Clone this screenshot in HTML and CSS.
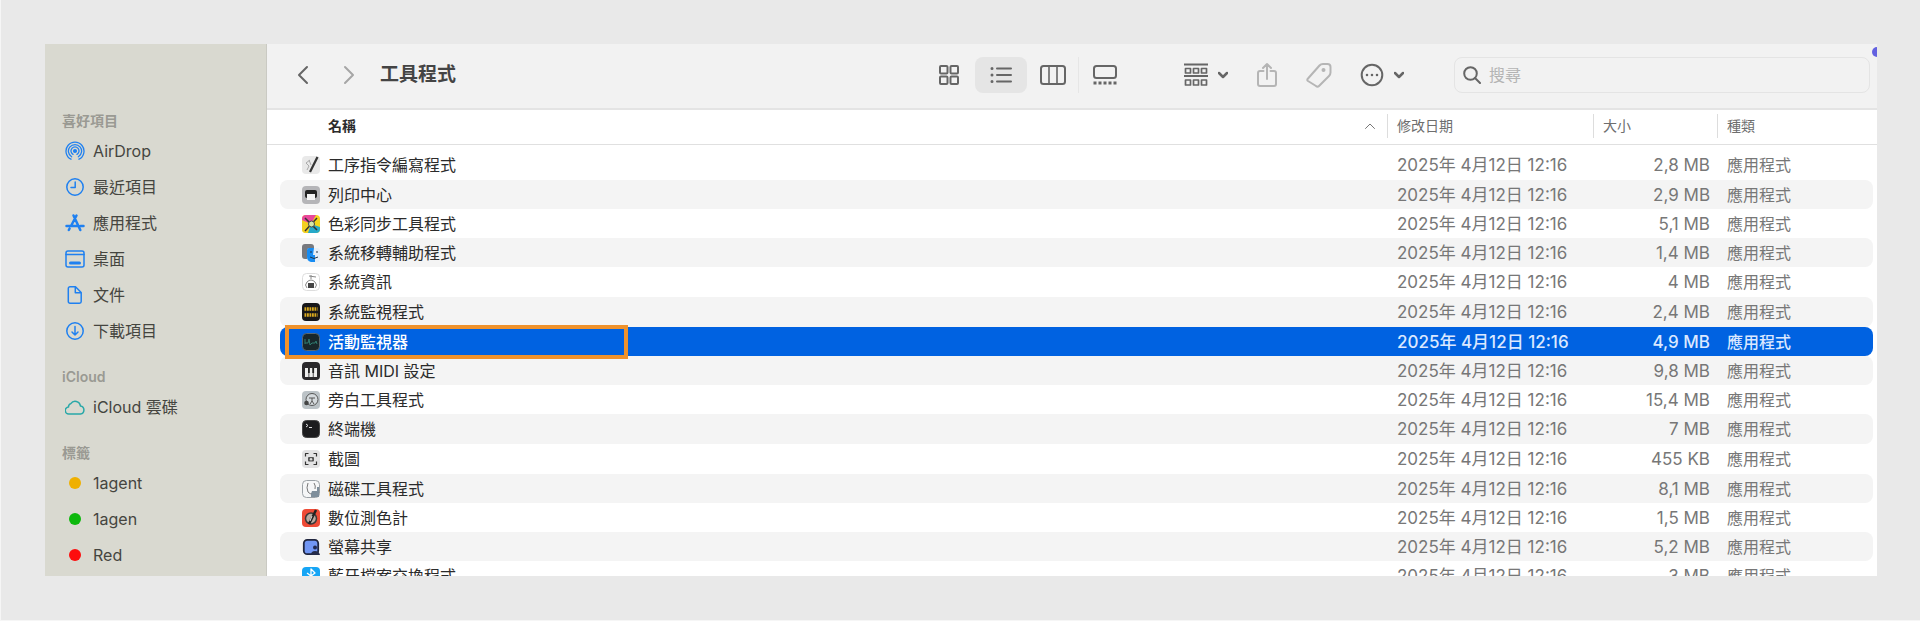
FILE: index.html
```html
<!DOCTYPE html>
<html lang="zh-Hant">
<head>
<meta charset="utf-8">
<title>工具程式</title>
<link rel="stylesheet" href="styles.css">
</head>
<body>
<div class="window">
  <nav class="sidebar">
    <h2>喜好項目</h2>
    <a href="#"><svg viewBox="0 0 20 20"><circle cx="10" cy="10" r="1.3" fill="currentColor"/><path d="M8 13.400a4 4 0 1 1 4 0M6.600 15.800a6.600 6.600 0 1 1 6.800 0M6 18.200a9 9 0 1 1 8 0" stroke-width="1.300"/></svg>AirDrop</a>
    <a href="#"><svg viewBox="0 0 20 20"><circle cx="10" cy="10" r="8.2"/><path d="M10.2 5v5.5H6"/></svg>最近項目</a>
    <a href="#"><svg viewBox="0 0 20 20" class="bold"><path d="M8.5 2.5l6.8 14.5M11.5 2.5L6 13M1.5 13h11M15.5 13h3M4.6 15.5L3.8 17"/></svg>應用程式</a>
    <a href="#"><svg viewBox="0 0 20 20"><rect x="1" y="2" width="18" height="16" rx="2"/><path d="M1 5.500h18"/><path d="M5.500 14h9" stroke-width="3"/></svg>桌面</a>
    <a href="#"><svg viewBox="0 0 20 20"><path d="M5 1.800h5.500l5.700 5.700v9a1.700 1.700 0 0 1-1.700 1.700H5a1.700 1.700 0 0 1-1.700-1.700v-13A1.700 1.700 0 0 1 5 1.800zM10.300 2v5.700H16"/></svg>文件</a>
    <a href="#"><svg viewBox="0 0 20 20"><circle cx="10" cy="10" r="8.200"/><path d="M10 5.500v8.500M7 11l3 3 3-3"/></svg>下載項目</a>
    <h2>iCloud</h2>
    <a href="#"><svg viewBox="0 0 20 20" class="teal"><path d="M4 17a3.500 3.500 0 0 1-.5-7 3.400 3.400 0 0 1 2.300-3.400 5.300 5.300 0 0 1 9.600 2.300A4.100 4.100 0 0 1 15.500 17z"/></svg>iCloud 雲碟</a>
    <h2>標籤</h2>
    <a href="#"><span class="dot yellow"></span>1agent</a>
    <a href="#"><span class="dot green"></span>1agen</a>
    <a href="#"><span class="dot red"></span>Red</a>
  </nav>
  <main class="content">
    <header class="toolbar">
      <div class="nav">
        <button aria-label="返回"><svg width="12" height="20" viewBox="0 0 12 20"><path d="M10 2L2 10l8 8"/></svg></button>
        <button class="dim" aria-label="往前"><svg width="12" height="20" viewBox="0 0 12 20"><path d="M2 2l8 8-8 8"/></svg></button>
        <h1>工具程式</h1>
      </div>
      <div class="tools">
        <div class="views">
          <button aria-label="圖像"><svg width="24" height="24" viewBox="0 0 24 24"><rect x="3" y="3" width="7.500" height="7.500" rx="1"/><rect x="13.500" y="3" width="7.500" height="7.500" rx="1"/><rect x="3" y="13.500" width="7.500" height="7.500" rx="1"/><rect x="13.500" y="13.500" width="7.500" height="7.500" rx="1"/></svg></button>
          <button class="active" aria-label="列表"><svg width="24" height="24" viewBox="0 0 24 24"><path d="M8 5.500h14M8 12h14M8 18.500h14"/><path d="M3 5.500h.01M3 12h.01M3 18.500h.01" stroke-width="3"/></svg></button>
          <button class="split" aria-label="直欄"><svg width="26" height="24" viewBox="0 0 26 24"><rect x="1" y="3" width="24" height="18" rx="2.500"/><path d="M9 3v18M17 3v18" stroke-width="1.600"/></svg></button>
          <button aria-label="圖庫"><svg width="26" height="24" viewBox="0 0 26 24"><rect x="2" y="3" width="22" height="12" rx="2.500"/><path d="M1.500 20h24" stroke-width="3" stroke-dasharray="3 2" stroke-linecap="butt"/></svg></button>
        </div>
        <button class="wide" aria-label="群組"><svg width="24" height="24" viewBox="0 0 24 24"><path d="M.5 1.500h23M.5 13h23"/><path d="M1.500 5.500h5v4.500h-5zM9.500 5.500h5v4.500h-5zM17.500 5.500h5v4.500h-5zM1.500 17h5v5h-5zM9.500 17h5v5h-5zM17.500 17h5v5h-5z" stroke-width="1.700"/></svg><svg width="10" height="8" viewBox="0 0 10 8" class="heavy"><path d="M1 2l4 4 4-4"/></svg></button>
        <button class="dim" aria-label="分享"><svg width="22" height="26" viewBox="0 0 22 26"><path d="M7.500 9H4a2 2 0 0 0-2 2v11a2 2 0 0 0 2 2h14a2 2 0 0 0 2-2V11a2 2 0 0 0-2-2h-3.500M11 17V2M7 6l4-4 4 4"/></svg></button>
        <button class="dim" aria-label="標籤"><svg width="26" height="26" viewBox="0 0 26 26"><path d="M2 16.500L13.500 3.500Q14.800 2 17 2h4.500Q24.500 2 24.500 5v5.500q0 2-1.500 3.500L13 24q-1.500 1.500-3 0l-8-5q-1.500-1 0-2.500z"/><circle cx="17.500" cy="8" r="1" fill="currentColor"/></svg></button>
        <button class="wide" aria-label="動作"><svg width="24" height="24" viewBox="0 0 24 24"><circle cx="12" cy="12" r="10.300"/><path d="M7 12h.01M12 12h.01M17 12h.01" stroke-width="2.600"/></svg><svg width="10" height="8" viewBox="0 0 10 8" class="heavy"><path d="M1 2l4 4 4-4"/></svg></button>
        <label class="search"><svg width="18" height="18" viewBox="0 0 18 18"><circle cx="7.500" cy="7.500" r="6.300"/><path d="M12 12l5 5"/></svg><input type="search" placeholder="搜尋" aria-label="搜尋"></label>
      </div>
      <span class="badge"></span>
    </header>
    <table>
      <colgroup><col><col class="c-date"><col class="c-size"><col class="c-kind"></colgroup>
      <thead><tr>
        <th class="name"><div>名稱<svg width="12" height="8" viewBox="0 0 12 8"><path d="M1.500 6.500L6 2l4.500 4.500"/></svg></div></th>
        <th><span>修改日期</span></th><th><span>大小</span></th><th><span>種類</span></th>
      </tr></thead>
      <tbody>
        <tr><td><div><svg viewBox="0 0 18 18"><rect width="18" height="18" rx="4" fill="#e9e9e9"/><path d="M8 4L4 7l3 3-2 4M7 4l2 5" fill="none" stroke="#aaa"/><path d="M15.500 1L8 16" stroke="#333" stroke-width="2.200"/></svg>工序指令編寫程式</div></td><td>2025年 4月12日 12:16</td><td>2,8 MB</td><td>應用程式</td></tr>
        <tr><td><div><svg viewBox="0 0 18 18"><rect width="18" height="18" rx="4" fill="#b5b5b8"/><rect x="3" y="4" width="12" height="8" rx="2" fill="#222"/><rect x="5" y="8" width="8" height="6" fill="#f4f4f4"/></svg>列印中心</div></td><td>2025年 4月12日 12:16</td><td>2,9 MB</td><td>應用程式</td></tr>
        <tr><td><div><svg viewBox="0 0 18 18"><rect width="18" height="18" rx="4" fill="#f3d51c"/><path d="M4 0h10L9 9 0 14V4a4 4 0 0 1 4-4z" fill="#e9479b"/><path d="M0 5l9 4-2 9H4a4 4 0 0 1-4-4z" fill="#f2cf22"/><path d="M9 9l9 3v2a4 4 0 0 1-4 4H6z" fill="#26a9c9"/><path d="M3 3l12 12M15 3L3 16" stroke="#333" stroke-width="1.500"/><circle cx="9.500" cy="9" r="3" fill="#d5e7a8" stroke="#444"/></svg>色彩同步工具程式</div></td><td>2025年 4月12日 12:16</td><td>5,1 MB</td><td>應用程式</td></tr>
        <tr><td><div><svg viewBox="0 0 18 18"><rect width="12" height="15" rx="3" fill="#77797f"/><rect x="5" y="4" width="13" height="14" rx="3" fill="#e5eef7"/><path d="M5 6q0-2 2-2h5l-1 7h2v7H9q-4-1-4-5z" fill="#168cf3"/><path d="M9 7v2M15 7v2M8 13q4 3 8 0" fill="none" stroke="#234"/></svg>系統移轉輔助程式</div></td><td>2025年 4月12日 12:16</td><td>1,4 MB</td><td>應用程式</td></tr>
        <tr><td><div><svg viewBox="0 0 18 18"><rect x=".5" y=".5" width="17" height="17" rx="4" fill="#fff" stroke="#ddd"/><path d="M9 2v4M7 3l7 1M5 15q-3-3 0-6 4-4 8 0 3 3 0 6" fill="none" stroke="#888"/><rect x="6" y="10" width="6" height="5" fill="#444"/></svg>系統資訊</div></td><td>2025年 4月12日 12:16</td><td>4 MB</td><td>應用程式</td></tr>
        <tr><td><div><svg viewBox="0 0 18 18"><rect width="18" height="18" rx="4" fill="#17171a"/><path d="M2.500 6h13M2.500 12h13" stroke="#d9a91f" stroke-width="3.600" stroke-dasharray="1.800 .7"/></svg>系統監視程式</div></td><td>2025年 4月12日 12:16</td><td>2,4 MB</td><td>應用程式</td></tr>
        <tr class="selected"><td><div><svg viewBox="0 0 18 18"><rect x=".5" y=".5" width="17" height="17" rx="4" fill="#18272b" stroke="#5b6870"/><path d="M3 11V6M3 10h3l1-4 1 6 2-2h3l1-2 1 3" fill="none" stroke="#2f7c70"/></svg>活動監視器</div><span class="callout"></span></td><td>2025年 4月12日 12:16</td><td>4,9 MB</td><td>應用程式</td></tr>
        <tr><td><div><svg viewBox="0 0 18 18"><rect width="18" height="18" rx="4" fill="#2a282b"/><path d="M3 6h3.500v9H3zM7.300 6h3.500v9H7.300zM11.600 6H15v9h-3.400z" fill="#eee"/><path d="M6.900 6v5M11.200 6v5" stroke="#222" stroke-width="1.800"/></svg>音訊 MIDI 設定</div></td><td>2025年 4月12日 12:16</td><td>9,8 MB</td><td>應用程式</td></tr>
        <tr><td><div><svg viewBox="0 0 18 18"><rect width="18" height="18" rx="4" fill="#bcc3c7"/><circle cx="10" cy="8.500" r="6" fill="#d5dadd" stroke="#555"/><path d="M7 7h6M10 7v3l-2 3M10 10l2 3" fill="none" stroke="#555"/><circle cx="4.500" cy="12" r="2.300" fill="#444"/></svg>旁白工具程式</div></td><td>2025年 4月12日 12:16</td><td>15,4 MB</td><td>應用程式</td></tr>
        <tr><td><div><svg viewBox="0 0 18 18"><rect x=".5" y=".5" width="17" height="17" rx="4" fill="#1c1c1e" stroke="#444"/><path d="M4 4l2 1.500L4 7M7 7.500h3" fill="none" stroke="#ddd"/></svg>終端機</div></td><td>2025年 4月12日 12:16</td><td>7 MB</td><td>應用程式</td></tr>
        <tr><td><div><svg viewBox="0 0 18 18"><rect width="18" height="18" rx="4" fill="#e2e2e3"/><path d="M3.500 6.500v-3h3M11.500 3.500h3v3M14.500 11.500v3h-3M6.500 14.500h-3v-3" fill="none" stroke="#333" stroke-width="1.200"/><rect x="6" y="7" width="6" height="4.500" rx="1" fill="#555"/><circle cx="9" cy="9.300" r="1.200" fill="#ddd"/></svg>截圖</div></td><td>2025年 4月12日 12:16</td><td>455 KB</td><td>應用程式</td></tr>
        <tr><td><div><svg viewBox="0 0 18 18"><rect x=".5" y=".5" width="17" height="17" rx="4" fill="#f5f6f7" stroke="#9ba1a6"/><path d="M6 3q-2 5 0 9 2 3 5 1M12 3q2 3 1 6M8 4h.01M11 4h.01" fill="none" stroke="#777"/><path d="M10 11h5V7h2v10H9v-3z" fill="#7e8e9b"/></svg>磁碟工具程式</div></td><td>2025年 4月12日 12:16</td><td>8,1 MB</td><td>應用程式</td></tr>
        <tr><td><div><svg viewBox="0 0 18 18"><rect width="18" height="18" rx="4" fill="#ee4b36"/><circle cx="9" cy="9.500" r="5.500" fill="#b9aaa0" stroke="#3a3a3a" stroke-width="1.500"/><path d="M14 1L7 15" stroke="#222" stroke-width="2.500"/><path d="M10 7l-2 5" stroke="#ddd"/></svg>數位測色計</div></td><td>2025年 4月12日 12:16</td><td>1,5 MB</td><td>應用程式</td></tr>
        <tr><td><div><svg viewBox="0 0 18 18"><rect x="1.800" y="1.800" width="14.400" height="14.400" rx="3.500" fill="#7196f4" stroke="#20263f" stroke-width="1.800"/><circle cx="13" cy="9.500" r="2" fill="#222a50"/><path d="M9 17q0-4 4-4t5 4z" fill="#252c4b"/></svg>螢幕共享</div></td><td>2025年 4月12日 12:16</td><td>5,2 MB</td><td>應用程式</td></tr>
        <tr><td><div><svg viewBox="0 0 18 18"><rect width="18" height="18" rx="4" fill="#16a5f5"/><path d="M5 6l8 6-4 4V2l4 4-8 6" fill="none" stroke="#fff" stroke-width="1.300"/></svg>藍牙檔案交換程式</div></td><td>2025年 4月12日 12:16</td><td>3 MB</td><td>應用程式</td></tr>
      </tbody>
    </table>
  </main>
</div>
</body>
</html>
```
FILE: styles.css
```css
* { box-sizing: border-box; }
body {
  margin: 0;
  height: 100vh;
  padding: 44px 43px 44px 44px;
  border-left: 1px solid #f6f6f6;
  border-bottom: 1px solid #f6f6f6;
  background: #e9e9e9;
  font: 16px/20px Inter, "Noto Sans CJK TC", sans-serif;
  overflow: hidden;
}
h1, h2 { margin: 0; }
button { padding: 0; border: 0; background: none; color: inherit; font: inherit; }
svg {
  display: block;
  flex: none;
  fill: none;
  stroke: currentColor;
  stroke-width: 2;
  stroke-linecap: round;
  stroke-linejoin: round;
}
.window {
  display: flex;
  height: 100%;
  overflow: hidden;
  background: #fff;
}
.sidebar {
  flex: none;
  width: 222px;
  padding: 67px 16px 0 17px;
  background: #d9d9d0;
  border-right: 1px solid #cacac3;
  overflow: hidden;
}
.sidebar h2 {
  height: 22px;
  color: #9a9a93;
  font-size: 14px;
  line-height: 20px;
  font-weight: 600;
}
.sidebar a {
  display: flex;
  align-items: center;
  gap: 8px;
  height: 36px;
  padding-left: 3px;
  color: #45453f;
  text-decoration: none;
  white-space: nowrap;
}
.sidebar a + h2 { margin-top: 18px; }
.sidebar svg { width: 20px; height: 20px; color: #1f80f0; stroke-width: 1.5; }
.sidebar svg.bold { stroke-width: 2.5; }
.sidebar svg.teal { color: #29a8a8; }
.dot { width: 12px; height: 12px; margin: 0 4px; border-radius: 50%; }
.yellow { background: #efb000; }
.green { background: #0db80d; }
.red { background: #fd0d0d; }
.content { flex: 1; min-width: 0; }
.toolbar {
  position: relative;
  display: flex;
  align-items: center;
  justify-content: space-between;
  height: 66px;
  padding: 0 7px 2px 30px;
  background: #f2f2f2;
  border-bottom: 2px solid #e4e4e4;
  color: #666;
}
.nav { display: flex; align-items: center; gap: 34px; }
.nav h1 { color: #444; font-size: 19px; line-height: 24px; font-weight: 700; margin-left: -9px; }
.dim { color: #b5b5b5; }
.nav .dim { color: #a6a6a6; }
.tools { display: flex; align-items: center; gap: 28px; }
.views { display: flex; margin-right: 25px; }
.views button {
  display: grid;
  place-items: center;
  width: 52px;
  height: 36px;
  border-radius: 8px;
}
.views .active { background: #e5e5e5; }
.views .split { border-right: 1px solid #e6e6e6; border-radius: 0; }
.wide { display: flex; align-items: center; gap: 10px; }
.heavy { stroke-width: 2.5; }
.search {
  display: flex;
  align-items: center;
  gap: 8px;
  width: 416px;
  height: 36px;
  margin-left: 22px;
  padding: 0 8px;
  border: 1px solid #e4e4e4;
  border-radius: 8px;
}
.search input {
  flex: 1;
  min-width: 0;
  border: 0;
  padding: 0;
  outline: 0;
  background: none;
  font: inherit;
  color: #444;
}
.search input::placeholder { color: #b4b4b4; }
.badge {
  position: absolute;
  top: 3px;
  right: -5px;
  width: 10px;
  height: 10px;
  border-radius: 50%;
  background: #6361e0;
}
table {
  width: calc(100% - 17px);
  margin: 0 4px 0 13px;
  border-collapse: separate;
  border-spacing: 0;
  table-layout: fixed;
}
.c-date { width: 206px; }
.c-size { width: 124px; }
.c-kind { width: 156px; }
th {
  height: 34px;
  padding: 2px 0 4px;
  color: #6e6e6e;
  font-size: 14px;
  font-weight: 400;
  text-align: left;
  box-shadow: 0 1px #e0e0e0;
}
th:first-child { box-shadow: -13px 0 #fff, -13px 1px #e0e0e0, 0 1px #e0e0e0; }
th:last-child { box-shadow: 4px 0 #fff, 4px 1px #e0e0e0, 0 1px #e0e0e0; }
th span { display: block; padding-left: 9px; border-left: 1px solid #ddd; line-height: 24px; }
.name { padding-left: 48px; color: #2b2b2b; font-weight: 600; }
.name div { display: flex; align-items: center; justify-content: space-between; padding-right: 11px; }
.name svg { color: #777; stroke-width: 1; }
tbody::before { content: ""; display: block; height: 6px; }
tbody tr { height: 29px; color: #777; }
tbody tr:nth-child(5n), tbody tr:nth-child(5n + 1) { height: 30px; }
tbody tr:nth-child(even) td { background: #f4f4f4; }
td { position: relative; padding: 0 0 0 10px; white-space: nowrap; }
td:first-child { padding-left: 22px; color: #2b2b2b; border-radius: 8px 0 0 8px; }
td:last-child { border-radius: 0 8px 8px 0; }
td:nth-child(2), td:nth-child(3) { font-size: 17px; }
td:nth-child(3) { padding: 0 7px 0 0; text-align: right; }
td div { display: flex; align-items: center; gap: 8px; }
td svg { width: 18px; height: 18px; stroke: none; stroke-width: 1; stroke-linecap: butt; }
tbody .selected td { background: #0062e1; color: #dbe8ff; font-weight: 500; }
tbody .selected td:first-child { color: #fff; }
.callout {
  position: absolute;
  z-index: 1;
  inset: -2px auto -3px 5px;
  width: 343px;
  border: 4px solid #ef922c;
}
```
